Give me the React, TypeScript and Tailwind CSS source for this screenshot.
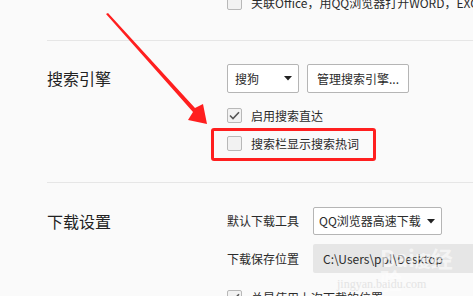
import React from 'react';

function Checkbox({ checked = false }: { checked?: boolean }) {
    return (
        <div className="w-[15px] h-[15px] shrink-0 rounded-[2px] border border-[#b8b8b8] bg-[#f2f2f2] flex items-center justify-center">
            {checked && (
                <svg width="11" height="9" viewBox="0 0 11 9">
                    <path d="M1 4.5 L4 7.5 L10 1.2" fill="none" stroke="#555" strokeWidth="1.6" />
                </svg>
            )}
        </div>
    );
}

function Caret() {
    return (
        <svg width="8" height="5" viewBox="0 0 8 5" className="shrink-0">
            <path d="M0 0 H8 L4 4.5 Z" fill="#222" />
        </svg>
    );
}

export default function App() {
    return (
        <div
            className="relative w-[473px] h-[296px] overflow-hidden bg-[#fafafa] text-[#2b2b2b] text-[12px]"
            style={{ fontFamily: '"Noto Sans CJK SC", "Noto Sans", sans-serif' }}
        >
            <div className="pl-[47px]">
                {/* previous section, cut off */}
                <div className="h-[40px] flex flex-col">
                    <div className="flex items-center gap-[9px] ml-[180px] mt-[-5px] whitespace-nowrap">
                        <Checkbox />
                        <span className="leading-[15px]">关联Office，用QQ浏览器打开WORD，EXCEL和PPT文档</span>
                    </div>
                </div>

                {/* 搜索引擎 */}
                <div className="border-t border-[#e6e6e6] flex pt-[23px] h-[142px]">
                    <div className="w-[180px] text-[16px] leading-[29px] text-[#222]">搜索引擎</div>
                    <div className="flex flex-col">
                        <div className="flex gap-[8px] h-[29px]">
                            <div className="w-[72px] bg-white border border-[#b5b5b5] rounded-[2px] flex items-center justify-between pl-[7px] pr-[6px]">
                                <span>搜狗</span>
                                <Caret />
                            </div>
                            <div className="w-[102px] bg-white border border-[#b5b5b5] rounded-[2px] flex items-center justify-center">
                                管理搜索引擎...
                            </div>
                        </div>
                        <div className="flex items-center gap-[9px] mt-[15px] h-[15px]">
                            <Checkbox checked />
                            <span>启用搜索直达</span>
                        </div>
                        <div className="flex items-center gap-[9px] mt-[13px] h-[15px]">
                            <Checkbox />
                            <span>搜索栏显示搜索热词</span>
                        </div>
                    </div>
                </div>

                {/* 下载设置 */}
                <div className="border-t border-[#e6e6e6] flex pt-[24px]">
                    <div className="w-[180px] text-[16px] leading-[28px] text-[#222]">下载设置</div>
                    <div className="flex flex-col flex-1">
                        <div className="flex items-center h-[28px]">
                            <span className="w-[86px]">默认下载工具</span>
                            <div className="w-[129px] h-[28px] bg-white border border-[#b5b5b5] rounded-[2px] flex items-center justify-between pl-[5px] pr-[6px]">
                                <span>QQ浏览器高速下载</span>
                                <Caret />
                            </div>
                        </div>
                        <div className="flex items-center h-[29px] mt-[9px]">
                            <span className="w-[86px]">下载保存位置</span>
                            <div className="flex-1 h-[29px] bg-[#e6e6e6] rounded-l-[2px] flex items-center pl-[10px]">
                                C:\Users\ppl\Desktop
                            </div>
                        </div>
                        <div className="flex items-center gap-[9px] mt-[17px] h-[15px]">
                            <Checkbox checked />
                            <span>总是使用上次下载的位置</span>
                        </div>
                    </div>
                </div>
            </div>

            {/* baidu watermark */}
            <div aria-hidden className="absolute left-[380px] top-[246px] text-[22px] font-bold text-white/60 leading-none pointer-events-none">
                Bai<span className="text-[16px]">度</span>经验
            </div>
            <div aria-hidden className="absolute left-[337px] top-[278px] text-[12px] text-[#e4e4e4] leading-none pointer-events-none" style={{ fontFamily: '"Liberation Serif", serif' }}>
                jingyan.baidu.com
            </div>

            {/* annotation: red frame */}
            <div className="absolute left-[211px] top-[128px] w-[165px] h-[33px] border-[3px] border-[#ff1f1f] rounded-[3px] pointer-events-none" />

            {/* annotation: red arrow */}
            <svg className="absolute left-0 top-0 pointer-events-none" width="473" height="296" viewBox="0 0 473 296">
                <polygon points="106,14 108,13 195,108 203,104 207,124 188,120 193,112" fill="#ff1f1f" />
            </svg>
        </div>
    );
}
